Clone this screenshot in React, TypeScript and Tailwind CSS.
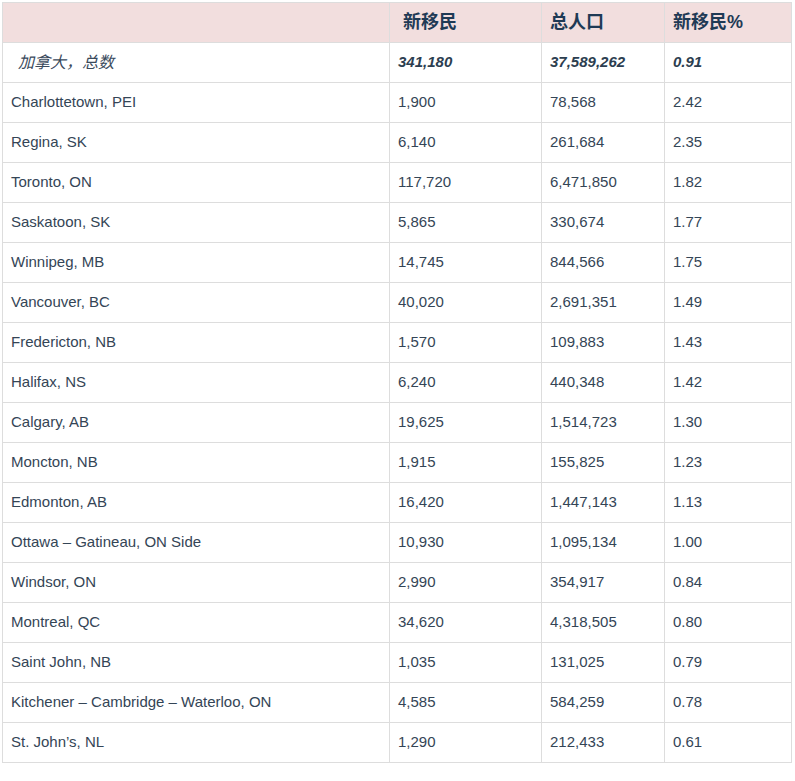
const rows: [string, string, string, string][] = [
  ['Charlottetown, PEI', '1,900', '78,568', '2.42'],
  ['Regina, SK', '6,140', '261,684', '2.35'],
  ['Toronto, ON', '117,720', '6,471,850', '1.82'],
  ['Saskatoon, SK', '5,865', '330,674', '1.77'],
  ['Winnipeg, MB', '14,745', '844,566', '1.75'],
  ['Vancouver, BC', '40,020', '2,691,351', '1.49'],
  ['Fredericton, NB', '1,570', '109,883', '1.43'],
  ['Halifax, NS', '6,240', '440,348', '1.42'],
  ['Calgary, AB', '19,625', '1,514,723', '1.30'],
  ['Moncton, NB', '1,915', '155,825', '1.23'],
  ['Edmonton, AB', '16,420', '1,447,143', '1.13'],
  ['Ottawa – Gatineau, ON Side', '10,930', '1,095,134', '1.00'],
  ['Windsor, ON', '2,990', '354,917', '0.84'],
  ['Montreal, QC', '34,620', '4,318,505', '0.80'],
  ['Saint John, NB', '1,035', '131,025', '0.79'],
  ['Kitchener – Cambridge – Waterloo, ON', '4,585', '584,259', '0.78'],
  ["St. John’s, NL", '1,290', '212,433', '0.61'],
]

const cell = 'border border-[#dddddd] px-[8px] h-[40px] align-middle'

export default function App() {
  return (
    <div className="bg-white p-[2px] w-[795px]" style={{ fontFamily: '"Liberation Sans", Arial, "Noto Sans CJK SC", sans-serif' }}>
      <table className="w-[789px] border-collapse text-[15px] text-[#344556] table-fixed">
        <colgroup>
          <col className="w-[387px]" />
          <col className="w-[152px]" />
          <col className="w-[123px]" />
          <col className="w-[127px]" />
        </colgroup>
        <thead>
          <tr className="bg-[#f2dede] text-[#1f3a55] text-[18px] font-bold text-left">
            <th className={cell}></th>
            <th className={cell + ' pl-[13px]'}>新移民</th>
            <th className={cell}>总人口</th>
            <th className={cell}>新移民%</th>
          </tr>
        </thead>
        <tbody>
          <tr className="italic">
            <td className={cell + ' pl-[15px] text-[16px] text-[#3a4a5c]'}>加拿大，总数</td>
            <td className={cell + ' font-bold text-[#2c3e50]'}>341,180</td>
            <td className={cell + ' font-bold text-[#2c3e50]'}>37,589,262</td>
            <td className={cell + ' font-bold text-[#2c3e50]'}>0.91</td>
          </tr>
          {rows.map(r => (
            <tr key={r[0]}>
              {r.map((v, i) => (
                <td key={i} className={cell}>{v}</td>
              ))}
            </tr>
          ))}
        </tbody>
      </table>
    </div>
  )
}
